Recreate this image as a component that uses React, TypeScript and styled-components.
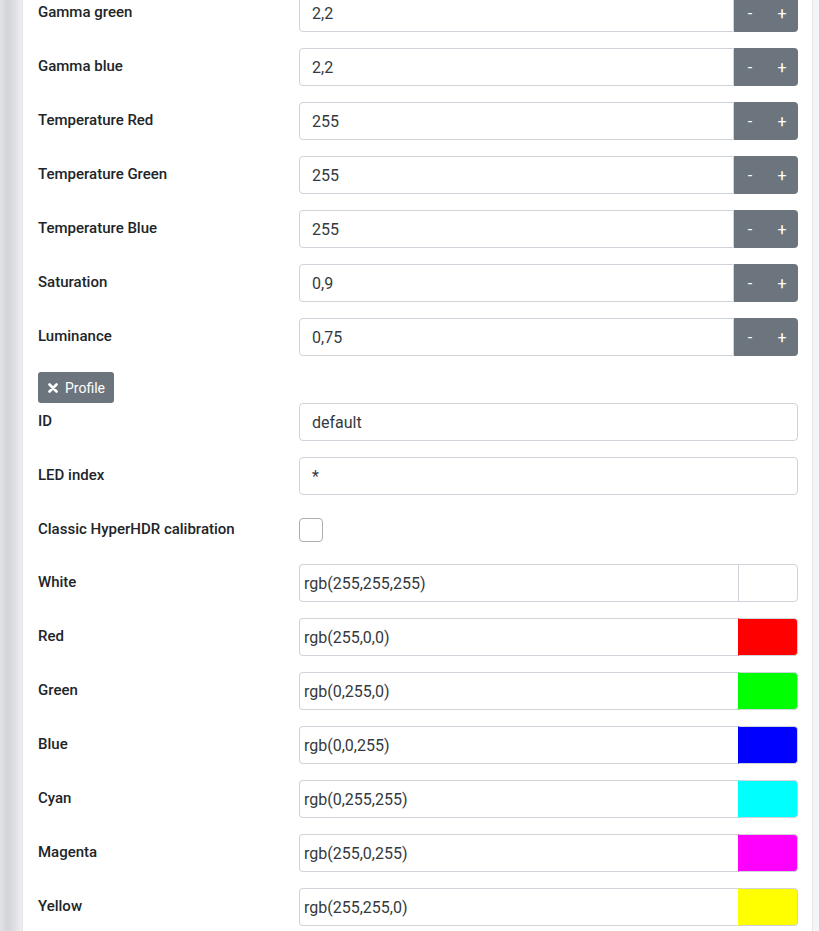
import React, { FC } from "react";
import styled, { createGlobalStyle } from "styled-components";

const GlobalStyle = createGlobalStyle`
  html, body {
    margin: 0;
    padding: 0;
    background: #f4f5f7;
    font-family: Roboto, "Liberation Sans", sans-serif;
  }
  * {
    box-sizing: border-box;
  }
`;

const Page = styled.div`
  display: flex;
  height: 931px;
  overflow: hidden;
`;

const SideShade = styled.div`
  width: 22px;
  flex-shrink: 0;
  background: linear-gradient(
    to right,
    #e2e3e6 0%,
    #d3d4d8 35%,
    #e0e1e4 70%,
    #f0f0f2 100%
  );
`;

const Card = styled.div`
  width: 791px;
  flex-shrink: 0;
  background: #ffffff;
  border-left: 1px solid #e3e5e8;
  border-right: 1px solid #e3e5e8;
  padding: 0 14px 0 15px;
`;

const Form = styled.div`
  margin-top: -6px;
  display: flex;
  flex-direction: column;
`;

const Row = styled.div<{ $short?: boolean }>`
  display: grid;
  grid-template-columns: 261px 1fr;
  align-items: center;
  height: ${(p) => (p.$short ? "37px" : "38px")};
  margin-bottom: 16px;
`;

const Label = styled.label`
  font-size: 15px;
  font-weight: 500;
  color: #212529;
  padding-bottom: 2px;
`;

const Group = styled.div`
  display: flex;
  height: 38px;
`;

const TextInput = styled.div<{ $compact?: boolean; $joined?: boolean }>`
  flex: 1;
  display: flex;
  align-items: center;
  height: 38px;
  padding-left: ${(p) => (p.$compact ? "4px" : "12px")};
  border: 1px solid #ced4da;
  border-radius: ${(p) => (p.$joined ? "4px 0 0 4px" : "4px")};
  font-size: 16px;
  color: #343a40;
  background: #fff;
`;

const SpinButton = styled.button<{ $last?: boolean }>`
  width: 32px;
  height: 38px;
  border: none;
  padding: 0;
  background: #6c757d;
  color: #fff;
  font-family: Roboto, "Liberation Sans", sans-serif;
  font-size: 16px;
  border-radius: ${(p) => (p.$last ? "0 4px 4px 0" : "0")};
`;

const Swatch = styled.div<{ $color: string }>`
  width: 60px;
  height: 38px;
  background: ${(p) => p.$color};
  border: 1px solid #ced4da;
  border-left-color: ${(p) => (p.$color === "#ffffff" ? "#ced4da" : p.$color)};
  border-radius: 0 4px 4px 0;
  margin-left: -1px;
`;

const ColorInput = styled(TextInput)`
  border-right: none;
  border-radius: 4px 0 0 4px;
`;

const Checkbox = styled.div`
  width: 24px;
  height: 24px;
  border: 1px solid #a9aeb3;
  border-radius: 4px;
  background: #fff;
`;

const ProfileButton = styled.button`
  align-self: flex-start;
  display: flex;
  align-items: center;
  gap: 7px;
  height: 31px;
  padding: 0 9px 0 10px;
  border: none;
  border-radius: 3px;
  background: #6c757d;
  color: #fff;
  font-family: Roboto, "Liberation Sans", sans-serif;
  font-size: 14px;
`;

const numberRows = [
  { label: "Gamma green", value: "2,2" },
  { label: "Gamma blue", value: "2,2" },
  { label: "Temperature Red", value: "255" },
  { label: "Temperature Green", value: "255" },
  { label: "Temperature Blue", value: "255" },
  { label: "Saturation", value: "0,9" },
  { label: "Luminance", value: "0,75" },
];

const colorRows = [
  { label: "White", value: "rgb(255,255,255)", color: "#ffffff" },
  { label: "Red", value: "rgb(255,0,0)", color: "#ff0000" },
  { label: "Green", value: "rgb(0,255,0)", color: "#00ff00" },
  { label: "Blue", value: "rgb(0,0,255)", color: "#0000ff" },
  { label: "Cyan", value: "rgb(0,255,255)", color: "#00ffff" },
  { label: "Magenta", value: "rgb(255,0,255)", color: "#ff00ff" },
  { label: "Yellow", value: "rgb(255,255,0)", color: "#ffff00" },
];

const CrossIcon: FC = () => (
  <svg width="10" height="10" viewBox="0 0 10 10">
    <path
      d="M1.5 1.5 L8.5 8.5 M8.5 1.5 L1.5 8.5"
      stroke="#fff"
      strokeWidth="2.6"
      strokeLinecap="round"
    />
  </svg>
);

const App: FC = () => (
  <>
    <GlobalStyle />
    <Page>
      <SideShade />
      <Card>
        <Form>
          {numberRows.map((r) => (
            <Row key={r.label}>
              <Label>{r.label}</Label>
              <Group>
                <TextInput $joined>{r.value}</TextInput>
                <SpinButton>-</SpinButton>
                <SpinButton $last>+</SpinButton>
              </Group>
            </Row>
          ))}
          <ProfileButton>
            <CrossIcon />
            Profile
          </ProfileButton>
          <Row>
            <Label>ID</Label>
            <TextInput>default</TextInput>
          </Row>
          <Row>
            <Label>LED index</Label>
            <TextInput>*</TextInput>
          </Row>
          <Row $short>
            <Label>Classic HyperHDR calibration</Label>
            <Checkbox />
          </Row>
          {colorRows.map((r) => (
            <Row key={r.label}>
              <Label>{r.label}</Label>
              <Group>
                <ColorInput $compact>{r.value}</ColorInput>
                <Swatch $color={r.color} />
              </Group>
            </Row>
          ))}
        </Form>
      </Card>
    </Page>
  </>
);

export default App;
